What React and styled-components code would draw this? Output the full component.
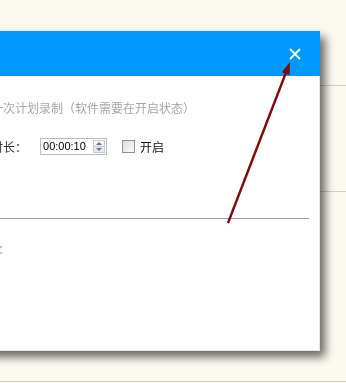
import React from 'react';
import styled, { createGlobalStyle } from 'styled-components';

const GlobalStyle = createGlobalStyle`
    html, body {
        margin: 0;
        padding: 0;
        background: #fbfaf0;
        overflow: hidden;
    }
    body {
        font-family: "Noto Sans CJK SC", "Liberation Sans", sans-serif;
    }
`;

const PageStyle = styled.div`
    width: 346px;
    height: 383px;
    display: flex;
    flex-direction: column;
`;

const PageSectionStyle = styled.div`
    height: ${({ h }) => h}px;
    border-bottom: solid 1px #cfcfc8;
    flex-shrink: 0;
`;

// the popup lies over the page behind it
const DialogStyle = styled.div`
    position: fixed;
    top: 31px;
    left: -41px;
    width: 361px;
    height: 320px;
    background: #fff;
    box-shadow: 5px 6px 9px rgba(0, 0, 0, 0.6);
    display: flex;
    flex-direction: column;
`;

const DialogHeaderStyle = styled.div`
    height: 45px;
    background: #0099ff;
    display: flex;
    align-items: center;
    justify-content: flex-end;
    padding-right: 19px;
    flex-shrink: 0;
`;

const CloseButtonStyle = styled.button`
    width: 12px;
    height: 12px;
    padding: 0;
    border: none;
    background: none;
    display: flex;
    margin-top: 1px;
`;

const DialogBodyStyle = styled.div`
    flex: 1;
    border-right: solid 1px #e6e6e6;
    border-bottom: solid 1px #e6e6e6;
    display: flex;
    flex-direction: column;
    padding-top: 22px;
`;

const FormStyle = styled.div`
    padding-left: 32px;
    display: flex;
    flex-direction: column;
    gap: 20px;
`;

const HintStyle = styled.div`
    font-size: 12px;
    line-height: 20px;
    height: 20px;
    color: #a6a6a6;
    white-space: nowrap;
    margin-left: ${({ offset }) => offset || 0}px;
`;

const RowStyle = styled.div`
    display: flex;
    align-items: center;
    height: 17px;
`;

const LabelStyle = styled.label`
    font-size: 12px;
    line-height: 17px;
    color: ${({ dark }) => (dark ? '#111' : '#333')};
    white-space: nowrap;
`;

const TimeInputStyle = styled.div`
    margin-left: 13px;
    width: 63px;
    height: 15px;
    border: solid 1px #b5bdc8;
    display: flex;
    align-items: center;
    justify-content: space-between;
    padding-left: 2px;
    box-sizing: content-box;
`;

const TimeTextStyle = styled.span`
    font-family: "Liberation Sans", Arial, sans-serif;
    font-size: 11px;
    line-height: 15px;
    color: #000;
`;

const SpinnerStyle = styled.div`
    width: 12px;
    height: 13px;
    margin-right: 1px;
    display: flex;
    flex-direction: column;
    border: solid 1px #c4cbd6;
    box-sizing: border-box;
    background: linear-gradient(#f6f8fb, #e3e8ef);
`;

const SpinHalfStyle = styled.div`
    flex: 1;
    display: flex;
    align-items: center;
    justify-content: center;
    border-top: ${({ bottom }) => (bottom ? 'solid 1px #c4cbd6' : 'none')};
`;

const CheckBoxStyle = styled.span`
    margin-left: 15px;
    width: 13px;
    height: 13px;
    box-sizing: border-box;
    border: solid 1px #8f8f8f;
    background: linear-gradient(135deg, #dcdcdc, #fbfbfb);
    margin-right: 5px;
`;

const DividerStyle = styled.div`
    margin: 63px 10px 0 0;
    height: 1px;
    background: #9a9a9a;
`;

const NoteRowStyle = styled.div`
    padding-left: 32px;
    margin-top: 20px;
`;

const ArrowOverlayStyle = styled.svg`
    position: fixed;
    left: 0;
    top: 0;
    pointer-events: none;
`;

const Arrow = () => (
    <ArrowOverlayStyle width="346" height="383" viewBox="0 0 346 383">
        <line x1="228" y1="223" x2="285.7" y2="73.2" stroke="#7d0a0c" strokeWidth="2.4" />
        <polygon points="290,62 289.6,75.2 281.8,72.2" fill="#7d0a0c" />
    </ArrowOverlayStyle>
);

const Dialog = () => (
    <DialogStyle>
        <DialogHeaderStyle>
            <CloseButtonStyle>
                <svg width="12" height="12" viewBox="0 0 12 12">
                    <path d="M1 1 L11 11 M11 1 L1 11" stroke="#fff" strokeWidth="1.8" />
                </svg>
            </CloseButtonStyle>
        </DialogHeaderStyle>
        <DialogBodyStyle>
            <FormStyle>
                <HintStyle>一次计划录制（软件需要在开启状态）</HintStyle>
                <RowStyle>
                    <LabelStyle>时长：</LabelStyle>
                    <TimeInputStyle>
                        <TimeTextStyle>00:00:10</TimeTextStyle>
                        <SpinnerStyle>
                            <SpinHalfStyle>
                                <svg width="6" height="3" viewBox="0 0 6 3"><path d="M0 3 L3 0 L6 3Z" fill="#6b7380" /></svg>
                            </SpinHalfStyle>
                            <SpinHalfStyle bottom>
                                <svg width="6" height="3" viewBox="0 0 6 3"><path d="M0 0 L3 3 L6 0Z" fill="#6b7380" /></svg>
                            </SpinHalfStyle>
                        </SpinnerStyle>
                    </TimeInputStyle>
                    <CheckBoxStyle />
                    <LabelStyle dark>开启</LabelStyle>
                </RowStyle>
            </FormStyle>
            <DividerStyle />
            <NoteRowStyle>
                <HintStyle offset={-17}>备注：</HintStyle>
            </NoteRowStyle>
        </DialogBodyStyle>
    </DialogStyle>
);

const App = () => (
    <>
        <GlobalStyle />
        <PageStyle>
            <PageSectionStyle h={85} />
            <PageSectionStyle h={105} />
            <PageSectionStyle h={189} />
        </PageStyle>
        <Dialog />
        <Arrow />
    </>
);

export default App;
